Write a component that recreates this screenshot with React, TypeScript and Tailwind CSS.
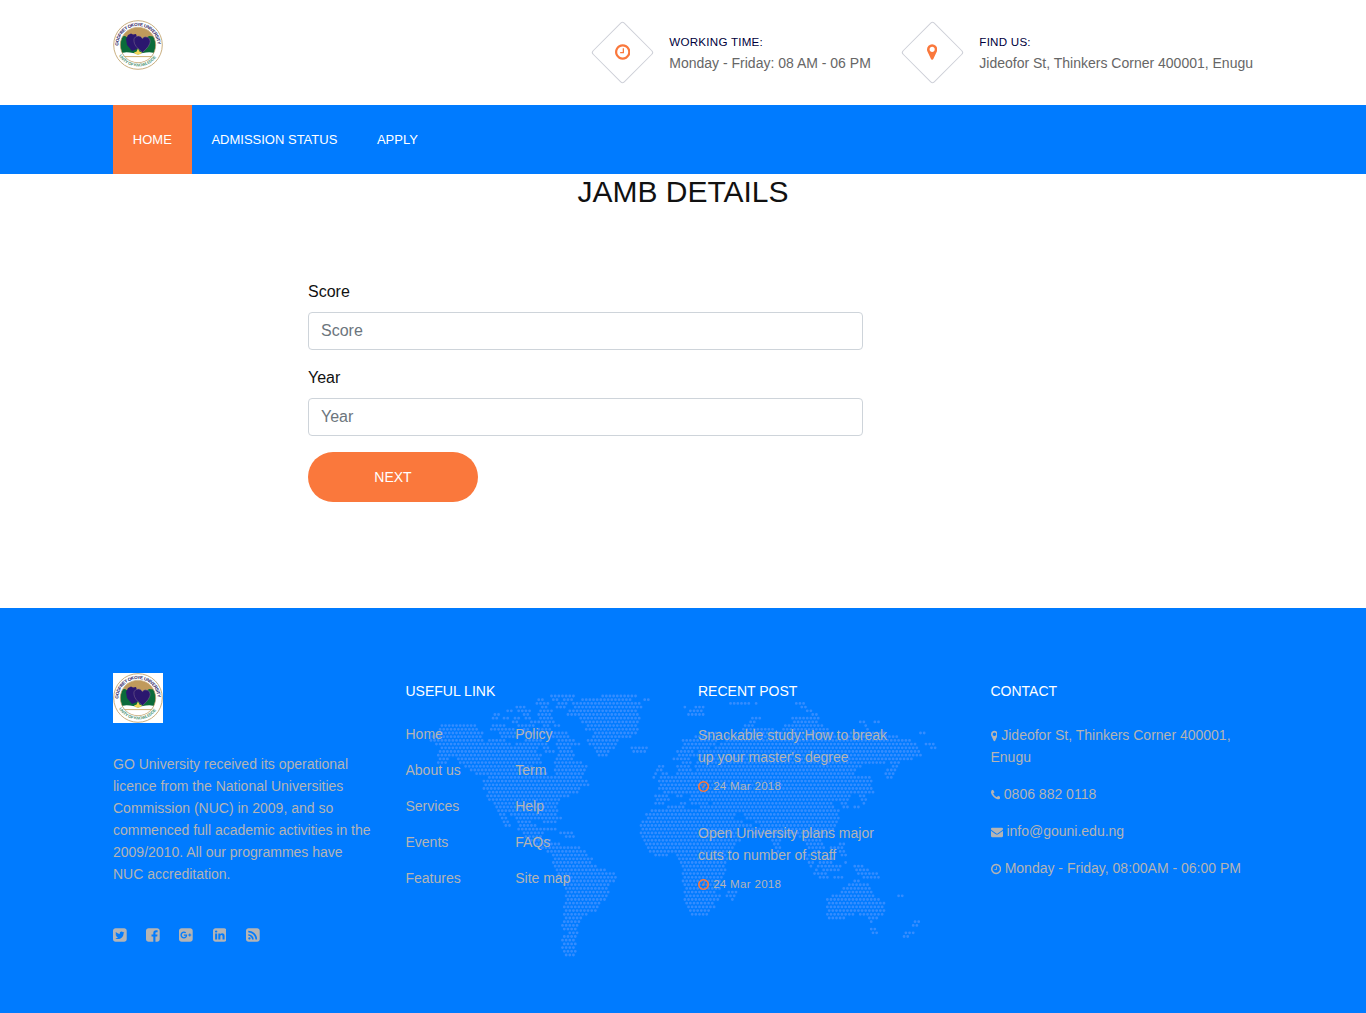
import React from 'react';

const square =
  'M1536 416v960q0 119-84.5 203.5t-203.5 84.5h-960q-119 0-203.5-84.5t-84.5-203.5v-960q0-119 84.5-203.5t203.5-84.5h960q119 0 203.5 84.5t84.5 203.5z';

const glyphs: Record<string, { w: number; d: string }> = {
  clock: {
    w: 1536,
    d: 'M896 544v448q0 14-9 23t-23 9h-320q-14 0-23-9t-9-23v-64q0-14 9-23t23-9h224v-352q0-14 9-23t23-9h64q14 0 23 9t9 23zM1312 896q0-148-73-273t-198-198-273-73-273 73-198 198-73 273 73 273 198 198 273 73 273-73 198-198 73-273zM1536 896q0 209-103 385.5t-279.5 279.5-385.5 103-385.5-103-279.5-279.5-103-385.5 103-385.5 279.5-279.5 385.5-103 385.5 103 279.5 279.5 103 385.5z',
  },
  marker: {
    w: 1024,
    d: 'M768 640q0-106-75-181t-181-75-181 75-75 181 75 181 181 75 181-75 75-181zM1024 640q0 109-33 179l-364 774q-16 33-47.5 52t-67.5 19-67.5-19-46.5-52l-365-774q-33-70-33-179 0-212 150-362t362-150 362 150 150 362z',
  },
  phone: {
    w: 1408,
    d: 'M1408 1240q0 27-10 70.5t-21 68.5q-21 50-122 106-94 51-186 51-27 0-53-3.5t-57.5-12.5-47-14.5-55.5-20.5-49-18q-98-35-175-83-127-79-264-216t-216-264q-48-77-83-175-3-9-18-49t-20.5-55.5-14.5-47-12.5-57.5-3.5-53q0-92 51-186 56-101 106-122 25-11 68.5-21t70.5-10q14 0 21 3 18 6 53 76 11 19 30 54t35 63.5 31 53.5q3 4 17.5 25t21.5 35.5 7 28.5q0 20-28.5 50t-62 55-62 53-28.5 46q0 9 5 22.5t8.5 20.5 14 24 11.5 19q76 137 174 235t235 174q2 1 19 11.5t24 14 20.5 8.5 22.5 5q18 0 46-28.5t53-62 55-62 50-28.5q14 0 28.5 7t35.5 21.5 25 17.5q25 15 53.5 31t63.5 35 54 30q70 35 76 53 3 7 3 21z',
  },
  envelope: {
    w: 1792,
    d: 'M1792 710v794q0 66-47 113t-113 47h-1472q-66 0-113-47t-47-113v-794q44 49 101 87 362 246 497 345 57 42 92.5 65.5t94.5 48 110 24.5h2q51 0 110-24.5t94.5-48 92.5-65.5q170-123 498-345 57-39 100-87zM1792 416q0 79-49 151t-122 123q-376 261-468 325-10 7-42.5 31t-54 38.5-52 32.5-57.5 27-50 9h-2q-23 0-50-9t-57.5-27-52-32.5-54-38.5-42.5-31q-91-64-262-182.5t-205-142.5q-62-42-117-115.5t-55-136.5q0-78 41.5-130t118.5-52h1472q65 0 112.5 47t47.5 113z',
  },
  twitter: {
    w: 1536,
    d: 'M1280 610q-56 25-121 34 68-40 93-117-65 38-134 51-61-66-153-66-87 0-148.5 61.5t-61.5 148.5q0 29 5 48-129-7-242-65t-192-155q-29 50-29 106 0 114 91 175-47-1-100-26v2q0 75 50 133.5t123 72.5q-29 8-51 8-13 0-39-4 21 63 74.5 104t121.5 42q-116 90-261 90-26 0-50-3 148 94 322 94 112 0 210-35.5t168-95 120.5-137 75-162 24.5-168.5q0-18-1-27 63-45 105-109z' + square,
  },
  facebook: {
    w: 1536,
    d: 'M1248 128q119 0 203.5 84.5t84.5 203.5v960q0 119-84.5 203.5t-203.5 84.5h-188v-595h199l30-232h-229v-148q0-56 23.5-84t91.5-28l122-1v-207q-63-9-178-9-136 0-217.5 80t-81.5 226v171h-200v232h200v595h-532q-119 0-203.5-84.5t-84.5-203.5v-960q0-119 84.5-203.5t203.5-84.5h960z',
  },
  google: {
    w: 1536,
    d: 'M917 905q0-26-6-64h-362v132h217q-3 24-16.5 50t-37.5 53-66.5 44.5-96.5 17.5q-99 0-169-71t-70-171 70-171 169-71q92 0 153 59l104-101q-108-100-257-100-160 0-272 112.5t-112 271.5 112 271.5 272 112.5q165 0 266.5-105t101.5-270zM1262 960h109v-110h-109v-110h-110v110h-110v110h110v110h110v-110z' + square,
  },
  linkedin: {
    w: 1536,
    d: 'M237 1414h231v-694h-231v694zM483 506q-1-52-36-86t-93-34-94.5 34-36.5 86q0 51 35.5 85.5t92.5 34.5h1q59 0 95-34.5t36-85.5zM1068 1414h231v-398q0-154-73-233t-193-79q-136 0-209 117h2v-101h-231q3 66 0 694h231v-388q0-38 7-56 15-35 45-59.5t74-24.5q116 0 116 157v371z' + square,
  },
  rss: {
    w: 1536,
    d: 'M512 1280q0-53-37.5-90.5t-90.5-37.5-90.5 37.5-37.5 90.5 37.5 90.5 90.5 37.5 90.5-37.5 37.5-90.5zM863 1374q-13-232-177-396t-396-177q-14-1-24 9t-10 23v128q0 13 8.5 22t21.5 10q154 11 264 121t121 264q1 13 10 21.5t22 8.5h128q13 0 23-10t9-24zM1247 1375q-5-154-56-297.5t-139.5-260-205-205-260-139.5-297.5-56q-14-1-23 9-10 10-10 23v128q0 13 9 22t22 10q204 7 378 111.5t278.5 278.5 111.5 378q1 13 10 22t22 9h128q13 0 23-10 11-9 9-23z' + square,
  },
};

function Glyph({ name, size, className = '' }: { name: string; size: number; className?: string }) {
  const g = glyphs[name];
  return (
    <svg
      viewBox={`0 0 ${g.w} 1792`}
      width={(g.w / 1792) * size}
      height={size}
      fill="currentColor"
      fillRule="evenodd"
      className={`inline-block shrink-0 ${className}`}
    >
      <path d={g.d} />
    </svg>
  );
}

function Crest({ id }: { id: string }) {
  return (
    <svg viewBox="0 0 50 50" width="50" height="50" className="block bg-white">
      <defs>
        <clipPath id={`${id}-in`}>
          <circle cx="25" cy="25" r="17.6" />
        </clipPath>
        <path id={`${id}-top`} d="M5.4 25.6a19.6 19.6 0 0 1 39.2 0" />
        <path id={`${id}-bot`} d="M4.6 33a22.2 22.2 0 0 0 40.8 0" />
      </defs>
      <circle cx="25" cy="25" r="24.3" fill="#fff" stroke="#c3a673" strokeWidth="0.9" />
      <g clipPath={`url(#${id}-in)`}>
        <rect width="50" height="50" fill="#c09a5c" />
        <path d="M5 17L12 16L25 24L36 16L45 17V37H5z" fill="#0b6b3a" />
        <path d="M5 50V36Q9 31 17 32.5Q22 33 25 34.5Q28 33 33 32.5Q41 31 45 36V50z" fill="#fff" />
        <path d="M11 36.6H39" stroke="#c7a560" strokeWidth="0.9" />
      </g>
      <circle cx="25" cy="25" r="17.7" fill="none" stroke="#c3a673" strokeWidth="0.7" />
      <path d="M15 15l3-1.5 2 1 3-.5 1 3 3 1 1 6-4 5-5 2-5-6-1-6z" fill="#2b176f" />
      <path d="M29.5 32.5Q21 26 21 21.3A4.4 4.4 0 0 1 29.3 18.6A4.4 4.4 0 0 1 37.2 21.5Q37 26 29.5 32.5z" fill="#2b176f" stroke="#83708f" strokeWidth="0.5" />
      <path d="M25 28.5l1.6 3.2 2.4.5-2 2.4h-4l-2-2.4 2.4-.5z" fill="#f1d65a" />
      <text fill="#2d2465" fontSize="4.6" fontWeight="700" fontFamily="Liberation Sans, sans-serif">
        <textPath href={`#${id}-top`} textLength="60">GODFREY OKOYE UNIVERSITY</textPath>
      </text>
      <text fill="#4b9476" fontSize="4.1" fontWeight="700" fontFamily="Liberation Sans, sans-serif">
        <textPath href={`#${id}-bot`} startOffset="3" textLength="44">UNITY OF KNOWLEDGE</textPath>
      </text>
    </svg>
  );
}

// Land spans of the dotted world map, one line per row of dots, in thirds of a pixel.
const landRows = `390-462 545-652
348-366 397-417 425-457 480-637 672-688
348-366 375-392 408-438 462-665 930-985 1000-1006 1127-1157
292-310 360-385 405-435 458-665 790-797 827-857 1145-1157
265-282 295-332 357-397 450-650 810-850 1160-1178
220-238 310-330 350-397 445-655 800-848 1170-1188
220-238 250-265 283-303 312-332 362-400 480-660 997-1025 1110-1200
272-290 330-405 490-660 985-1010 1115-1195 1318-1336 1362-1380
60-165 215-255 295-345 372-385 398-415 498-655 970-1000 1088-1205 1330-1345
55-175 210-285 305-330 350-395 498-650 965-1060 1090-1220 1335-1345
50-185 243-290 300-440 525-650 855-900 960-1240 1290-1400 1497-1515
40-180 243-290 400-450 515-635 825-880 900-1435
30-185 205-255 320-360 410-460 505-600 790-890 915-1470
45-270 290-385 410-485 512-590 790-885 900-1490 1520-1540
60-355 365-385 415-455 520-582 635-687 785-870 890-1495 1530-1547
60-345 370-400 415-455 527-570 635-672 775-825 840-1495
55-360 415-460 535-562 770-820 835-1500
60-88 115-362 410-463 758-810 835-1475
55-85 118-360 405-490 790-815 835-1370 1380-1400 1415-1435
130-340 405-497 712-730 775-808 820-1325 1415-1435
148-360 403-495 712-730 770-810 825-1310 1405-1430
172-380 403-490 700-710 725-740 770-1300 1395-1420
210-490 693-705 725-765 775-1355 1400-1415
192-505 715-1360
192-510 720-1355
192-485 720-1360
200-475 735-795 800-1350 1355-1367
203-450 705-745 768-785 810-1290 1320-1335
210-422 705-745 810-1285 1325-1335
220-410 705-735 785-800 815-860 880-1240 1260-1285 1328-1334
225-412 745-795 840-1240 1265-1285 1300-1320
230-412 690-1255
235-250 268-412 680-945 975-1255
240-258 290-420 678-945 975-1255
245-262 293-335 370-410 665-970 1005-1255
252-270 303-352 663-1000 1020-1250
298-372 378-408 665-960 985-1240
305-365 422-460 663-955 1000-1230
320-360 430-460 665-955 1050-1100 1140-1215
335-390 668-960 1055-1085 1150-1200
350-418 675-950 1060-1080 1160-1205 1255-1270
355-475 680-940 1065-1078 1165-1210 1235-1270
380-497 685-935 1073-1080 1180-1200 1260-1275
400-505 700-740 775-920 1150-1170 1265-1275
398-515 780-930 1155-1170 1210-1240
398-515 780-920 1160-1178 1200-1240 1270-1278
398-525 785-918 1165-1180 1195-1240 1250-1262 1300-1330
405-553 787-915 1182-1192 1205-1235 1245-1260 1310-1350
412-585 787-915 1185-1225 1315-1370
412-590 787-910 1195-1222 1245-1255 1262-1270 1330-1380
430-583 790-905 1300-1320
435-570 795-905 1280-1350
436-562 795-905 1265-1350
438-565 790-890 925-955 1260-1360
438-560 792-898 920-950 1235-1365 1430-1448
438-552 795-895 930-945 1222-1382
434-542 798-885 1225-1390
434-540 803-880 1220-1392
432-527 805-870 1220-1390
428-507 812-865 1220-1300 1320-1390
430-490 1225-1278 1340-1368
428-478 1350-1357 1478-1497
426-475 1478-1497
426-466 1353-1370
443-473 1360-1368 1460-1478
435-467 1450-1470
426-468
430-470
424-464
428-468
436-466`.split('\n');

const pitch = 10.96;
const dots = landRows
  .map((row, n) => {
    const shift = n % 2 ? pitch / 2 : 0;
    const y = (48 + 11.1 * n) / 3;
    return row
      .split(' ')
      .map((span) => {
        const [a, b] = span.split('-').map(Number);
        const first = Math.round((a + 3 - shift) / pitch);
        const last = Math.max(first, Math.round((b - 3 - shift) / pitch));
        let out = '';
        for (let i = first; i <= last; i++) out += `M${((i * pitch + shift) / 3).toFixed(2)} ${y.toFixed(2)}h.01`;
        return out;
      })
      .join('');
  })
  .join('');

function WorldMap() {
  return (
    <svg className="pointer-events-none absolute left-[420px] top-[72px]" width="526" height="285" viewBox="0 0 526 285">
      <path d={dots} stroke="#7fa6ff" strokeOpacity="0.42" strokeWidth="2.8" strokeLinecap="round" fill="none" />
    </svg>
  );
}

function InfoItem({ icon, title, text }: { icon: string; title: string; text: string }) {
  return (
    <div className="flex">
      <div className="relative mt-[30px] flex h-[45px] w-[45px] items-center justify-center">
        <span className="absolute inset-0 rotate-45 rounded-[3px] border border-[#ced0d8]" />
        <Glyph name={icon} size={18} className="relative -top-px text-[#fa783c]" />
      </div>
      <div className="mt-[32px] ml-[24.5px] whitespace-nowrap">
        <div className="text-[11.6px] leading-[20px] tracking-[0.24px] text-[#00003c]">{title}</div>
        <div className="text-[14px] leading-[22px] text-[#666]">{text}</div>
      </div>
    </div>
  );
}

function Field({ label }: { label: string }) {
  return (
    <label className="mb-4 block text-[16px] leading-6 text-[#212529]">
      <span className="mb-2 block text-[#111]">{label}</span>
      <input
        placeholder={label}
        className="block h-[38px] w-full rounded border border-[#ced4da] bg-white px-3 outline-none placeholder:text-[#6c757d]"
      />
    </label>
  );
}

function Post({ lines }: { lines: string[] }) {
  return (
    <div className="mb-[25px]">
      {lines.map((l) => (
        <div key={l}>{l}</div>
      ))}
      <div className="mt-[7px] flex h-[22px] items-center text-[11.6px] tracking-[0.28px]">
        <Glyph name="clock" size={13} className="mr-[4px] text-[#fa783c]" />
        24 Mar 2018
      </div>
    </div>
  );
}

const contacts = [
  ['marker', 'Jideofor St, Thinkers Corner 400001, Enugu'],
  ['phone', '0806 882 0118'],
  ['envelope', 'info@gouni.edu.ng'],
  ['clock', 'Monday - Friday, 08:00AM - 06:00 PM'],
];

export default function App() {
  return (
    <div className="h-[1013px] w-[1366px] overflow-hidden bg-white font-['Liberation_Sans',Arial,sans-serif]">
      <header className="mx-auto flex h-[105px] w-[1140px] justify-between">
        <div className="pt-5">
          <Crest id="head" />
        </div>
        <div className="flex gap-[39px]">
          <InfoItem icon="clock" title="WORKING TIME:" text="Monday - Friday: 08 AM - 06 PM" />
          <InfoItem icon="marker" title="FIND US:" text="Jideofor St, Thinkers Corner 400001, Enugu" />
        </div>
      </header>
      <nav className="h-[69px] bg-[#007bff]">
        <div className="mx-auto flex h-full w-[1140px] items-stretch text-[13px] text-white">
          <a className="flex items-center bg-[#fa783c] px-[19.8px]">HOME</a>
          <a className="flex items-center px-[19.8px]">ADMISSION STATUS</a>
          <a className="flex items-center px-[19.8px]">APPLY</a>
        </div>
      </nav>
      <main className="h-[434px]">
        <h1 className="text-center text-[30px] leading-[36px] text-[#111]">JAMB DETAILS</h1>
        <form className="mt-[70px] ml-[308px] w-[555px]">
          <Field label="Score" />
          <Field label="Year" />
          <button type="button" className="block h-[50px] w-[170px] rounded-full bg-[#fa783c] text-[14px] text-white">
            NEXT
          </button>
        </form>
      </main>
      <footer className="relative h-[405px] bg-[#007bff] text-[14px] leading-[22px] text-[#b4b4b4]">
        <WorldMap />
        <div className="relative ml-[113px] grid w-[1170px] grid-cols-4 pt-[65px]">
          <section className="w-[262px]">
            <Crest id="foot" />
            <p className="mt-[30px]">
              GO University received its operational licence from the National Universities Commission (NUC) in 2009, and so
              commenced full academic activities in the 2009/2010. All our programmes have NUC accreditation.
            </p>
            <div className="mt-[42px] flex gap-[19.5px]">
              {['twitter', 'facebook', 'google', 'linkedin', 'rss'].map((n) => (
                <Glyph key={n} name={n} size={16} />
              ))}
            </div>
          </section>
          <section className="pt-[7px]">
            <h2 className="text-white">USEFUL LINK</h2>
            <div className="mt-[21px] grid w-[219.4px] grid-cols-2 gap-y-[14px]">
              {['Home', 'Policy', 'About us', 'Term', 'Services', 'Help', 'Events', 'FAQs', 'Features', 'Site map'].map((t) => (
                <a key={t}>{t}</a>
              ))}
            </div>
          </section>
          <section className="pt-[7px]">
            <h2 className="mb-[22px] text-white">RECENT POST</h2>
            <Post lines={['Snackable study:How to break', "up your master's degree"]} />
            <Post lines={['Open University plans major', 'cuts to number of staff']} />
          </section>
          <section className="pt-[7px]">
            <h2 className="mb-[22px] text-white">CONTACT</h2>
            {contacts.map(([icon, text]) => (
              <p key={icon} className="mb-[15px] w-[262px]">
                <Glyph name={icon} size={12} className="align-[-1.7px]" /> {text}
              </p>
            ))}
          </section>
        </div>
      </footer>
    </div>
  );
}
